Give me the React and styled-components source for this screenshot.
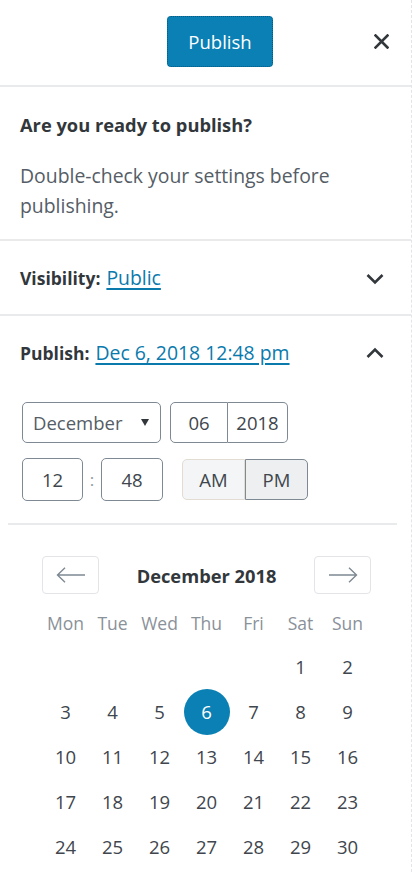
import React from "react";
import styled, { createGlobalStyle, css } from "styled-components";

const GlobalStyle = createGlobalStyle`
  html, body { margin: 0; padding: 0; background: #fff; }
  body { font-family: "Open Sans", "Noto Sans", sans-serif; color: #32373c; }
  * { box-sizing: border-box; }
`;

const Panel = styled.div`
  width: 412px;
  min-height: 872px;
  border-right: 1px dashed #e2e4e7;
  background: #fff;
  overflow: hidden;
`;

const Header = styled.header`
  height: 87px;
  display: flex;
  align-items: center;
  padding: 0 10px 0 167px;
  border-bottom: 2px solid #e8eaeb;
`;

const PublishButton = styled.button`
  width: 106px;
  height: 51px;
  margin-top: -2px;
  background: #0a80b4;
  color: #fff;
  border: 1px dotted #005a82;
  border-radius: 4px;
  font-family: inherit;
  font-size: 18.5px;
  cursor: pointer;
`;

const IconButton = styled.button`
  margin-left: auto;
  width: 40px;
  height: 40px;
  display: flex;
  align-items: center;
  justify-content: center;
  background: none;
  border: 0;
  padding: 0;
  color: #32373c;
  margin-top: -2px;
`;

const Intro = styled.section`
  padding: 26px 20px 18px;
  border-bottom: 2px solid #e8eaeb;
`;

const Title = styled.h2`
  margin: 0;
  font-size: 18.3px;
  line-height: 24px;
  font-weight: 700;
  color: #32373c;
`;

const Text = styled.p`
  margin: 24px 0 0;
  font-size: 19.4px;
  line-height: 30px;
  color: #555d66;
`;

const Section = styled.section`
  border-bottom: ${(p) => (p.$last ? "none" : "2px solid #e8eaeb")};
`;

const Row = styled.div`
  height: 73px;
  display: flex;
  align-items: center;
  justify-content: space-between;
  padding: 0 24px 0 20px;
`;

const RowLabel = styled.div`
  font-size: 19.4px;
  color: #32373c;
  display: flex;
  gap: 6px;
`;

const Strong = styled.span`
  font-weight: 700;
  font-size: 17.5px;
  align-self: center;
`;

const Link = styled.a`
  color: #0a7aad;
  text-decoration: underline;
  text-underline-offset: 3px;
  text-decoration-thickness: 1.5px;
`;

const Controls = styled.div`
  padding: 13px 0 0 22px;
  display: flex;
  flex-direction: column;
  gap: 15px;
`;

const ControlLine = styled.div`
  display: flex;
  align-items: center;
`;

const fieldBase = css`
  height: 41px;
  border: 1.5px solid #7e8993;
  display: flex;
  align-items: center;
  font-size: 18.5px;
  color: #40464d;
`;

const Select = styled.div`
  ${fieldBase};
  width: 139px;
  border-radius: 5px;
  padding: 0 11px 0 10px;
  justify-content: space-between;
  color: #555d66;
`;

const Group = styled.div`
  display: flex;
  margin-left: ${(p) => p.$ml || 0}px;
  height: ${(p) => p.$h || 41}px;
`;

const Field = styled.div`
  ${fieldBase};
  height: 100%;
  width: ${(p) => p.$w}px;
  justify-content: center;
  border-radius: ${(p) => p.$radius || "5px"};
  ${(p) => p.$noLeft && "border-left: 0;"}
`;

const Colon = styled.span`
  width: 18px;
  text-align: center;
  color: #8f98a1;
  font-size: 17px;
`;

const Toggle = styled.div`
  ${fieldBase};
  height: 100%;
  width: ${(p) => p.$w}px;
  justify-content: center;
  background: ${(p) => (p.$pressed ? "#edeff0" : "#f3f5f6")};
  border-color: ${(p) => (p.$pressed ? "#7e8993" : "#e2dcd3")};
  border-radius: ${(p) => p.$radius};
  color: #40464d;
`;

const Divider = styled.hr`
  margin: 22px 14px 0 8px;
  border: 0;
  border-top: 2px solid #e8eaeb;
`;

const Calendar = styled.div`
  padding: 31px 0 0 42px;
  width: 371px;
`;

const Nav = styled.div`
  display: flex;
  align-items: center;
  justify-content: space-between;
`;

const NavButton = styled.button`
  width: 57px;
  height: 38px;
  border: 1.5px solid #e2e4e7;
  border-radius: 4px;
  background: #fff;
  display: flex;
  align-items: center;
  justify-content: center;
  padding: 0;
  color: #7e8993;
`;

const MonthTitle = styled.div`
  font-size: 18.3px;
  font-weight: 700;
  color: #32373c;
`;

const Grid = styled.div`
  display: grid;
  grid-template-columns: repeat(7, 47px);
  grid-auto-rows: 45px;
  margin-top: ${(p) => p.$mt || 0}px;
`;

const WeekDay = styled.div`
  display: flex;
  align-items: center;
  justify-content: center;
  font-size: 17.5px;
  color: #8a9199;
  height: 48px;
`;

const Day = styled.div`
  display: flex;
  align-items: center;
  justify-content: center;
  font-size: 18.5px;
  color: #40464d;
  grid-column-start: ${(p) => p.$start || "auto"};
`;

const DayCircle = styled.span`
  width: 46px;
  height: 46px;
  border-radius: 50%;
  display: flex;
  align-items: center;
  justify-content: center;
  ${(p) =>
    p.$selected &&
    css`
      background: #0a80b4;
      color: #fff;
    `}
`;

const Close = () => (
  <svg width="15" height="15" viewBox="0 0 15 15">
    <path d="M1.5 1.5 L13.5 13.5 M13.5 1.5 L1.5 13.5" stroke="#32373c" strokeWidth="2.6" strokeLinecap="square" />
  </svg>
);

const Chevron = ({ up }) => (
  <svg width="24" height="24" viewBox="0 0 24 24">
    <path
      d={up ? "M4.5 16 L12 8.5 L19.5 16" : "M4.5 9 L12 16.5 L19.5 9"}
      fill="none"
      stroke="#32373c"
      strokeWidth="2.6"
    />
  </svg>
);

const Caret = () => (
  <svg width="8" height="7" viewBox="0 0 8 7">
    <path d="M0 0 H8 L4 7 Z" fill="#32373c" />
  </svg>
);

const Arrow = ({ right }) => (
  <svg width="30" height="16" viewBox="0 0 30 16" style={right ? { transform: "scaleX(-1)" } : undefined}>
    <path d="M1.5 8 H29 M9 0.8 L1.5 8 L9 15.2" fill="none" stroke="#7e8993" strokeWidth="1.4" />
  </svg>
);

const weekdays = ["Mon", "Tue", "Wed", "Thu", "Fri", "Sat", "Sun"];
const days = Array.from({ length: 30 }, (_, i) => i + 1);

export default function App() {
  return (
    <>
      <GlobalStyle />
      <Panel>
        <Header>
          <PublishButton>Publish</PublishButton>
          <IconButton aria-label="Close">
            <Close />
          </IconButton>
        </Header>

        <Intro>
          <Title>Are you ready to publish?</Title>
          <Text>Double-check your settings before publishing.</Text>
        </Intro>

        <Section>
          <Row>
            <RowLabel>
              <Strong>Visibility:</Strong>
              <Link>Public</Link>
            </RowLabel>
            <Chevron />
          </Row>
        </Section>

        <Section $last>
          <Row>
            <RowLabel>
              <Strong>Publish:</Strong>
              <Link>Dec 6, 2018 12:48 pm</Link>
            </RowLabel>
            <Chevron up />
          </Row>

          <Controls>
            <ControlLine>
              <Select>
                <span>December</span>
                <Caret />
              </Select>
              <Group $ml={9}>
                <Field $w={58} $radius="5px 0 0 5px">06</Field>
                <Field $w={60} $radius="0 5px 5px 0" $noLeft>2018</Field>
              </Group>
            </ControlLine>
            <ControlLine>
              <Group $h={43}>
                <Field $w={61}>12</Field>
              </Group>
              <Colon>:</Colon>
              <Group $h={43}>
                <Field $w={62}>48</Field>
              </Group>
              <Group $ml={19}>
                <Toggle $w={63} $radius="5px 0 0 5px">AM</Toggle>
                <Toggle $w={63} $radius="0 5px 5px 0" $pressed>PM</Toggle>
              </Group>
            </ControlLine>
          </Controls>

          <Divider />

          <Calendar>
            <Nav>
              <NavButton aria-label="Previous month">
                <Arrow />
              </NavButton>
              <MonthTitle>December 2018</MonthTitle>
              <NavButton aria-label="Next month">
                <Arrow right />
              </NavButton>
            </Nav>
            <Grid $mt={5}>
              {weekdays.map((w) => (
                <WeekDay key={w}>{w}</WeekDay>
              ))}
            </Grid>
            <Grid>
              {days.map((d) => (
                <Day key={d} $start={d === 1 ? 6 : undefined}>
                  <DayCircle $selected={d === 6}>{d}</DayCircle>
                </Day>
              ))}
            </Grid>
          </Calendar>
        </Section>
      </Panel>
    </>
  );
}
